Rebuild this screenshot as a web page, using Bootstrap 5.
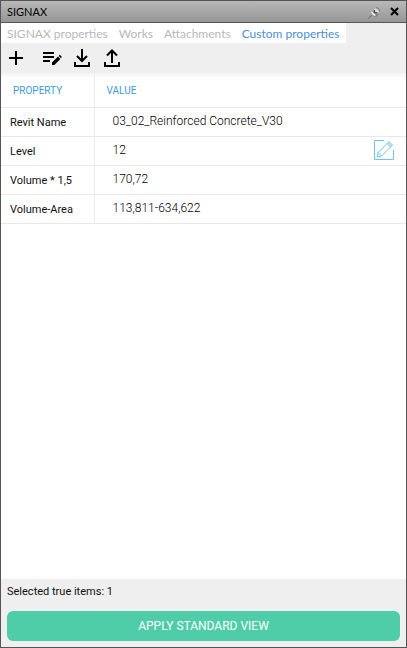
<!DOCTYPE html>
<html lang="en">
<head>
<meta charset="utf-8">
<meta name="viewport" content="width=device-width, initial-scale=1">
<title>SIGNAX</title>
<link href="https://cdn.jsdelivr.net/npm/bootstrap@5.3.0/dist/css/bootstrap.min.css" rel="stylesheet">
<style>
  body { font-family: Roboto, "Liberation Sans", sans-serif; font-size: 11px; line-height: 16px; color: #111; background: #efefef; }
  .panel { border: 1px solid #555; }
  .titlebar { height: 22px; padding: 0 3px 0 6px; background: linear-gradient(#b9b9b9, #969696); border-bottom: 1px solid #555; }
  .titlebar h1 { font: 11px/20px Lato, "Open Sans", sans-serif; color: #000; }
  .titlebar button { width: 16px; height: 16px; }
  .tabs { background: #fff; padding: 0 6px; gap: 11px; }
  .tabs .nav-link { color: #b8b8b8; padding: 1px 0 0; font: 12px/19px Lato, "Open Sans", sans-serif; white-space: nowrap; }
  .tabs .nav-link.active { color: #4a90d9; }
  .tools { height: 30px; padding: 0 5px; }
  .tools button, .edit { width: 20px; height: 20px; }
  .tools .btn + .btn { margin-left: 10px; }
  .tools .btn:nth-child(2) { margin-left: 16px; }
  .tools svg, .edit svg, .titlebar svg { display: block; }
  .props { table-layout: fixed; }
  .props th, .props td { height: 29px; padding: 2px 0 0 9px; border-bottom: 1px solid #e9e9e9; font-weight: 400; vertical-align: middle; }
  .props tr > :first-child { border-right: 1px solid #ececec; }
  .props td { padding: 0 0 1px 18px; font-size: 12px; font-weight: 300; color: #000; }
  .props thead th { height: 34px; padding-left: 12px; color: #3d9bd8; font-size: 10px; }
  .props thead { background: linear-gradient(#f4f4f4, #fff 6px); }
  .name-col { width: 93px; }
  .foot { padding: 5px 6px 6px; }
  .apply { height: 30px; margin-top: 11px; padding: 0; border: 0; border-radius: 6px; background: #4fcda8; color: #fff; font-size: 12px; line-height: 30px; }
</style>
</head>
<body>
<main class="panel d-flex flex-column vh-100">
  <header class="titlebar d-flex align-items-center">
    <h1 class="m-0 me-auto">SIGNAX</h1>
    <button type="button" class="btn p-0 border-0 me-1" aria-label="Pin panel">
      <svg width="16" height="16" viewBox="0 0 16 16"><path d="M1.500 14.500l4-4" stroke="#666"/><path d="M4 7.500l3-1 5 4-3 2.500-3-1z" fill="#808080"/><path d="M4.500 7.500q1 3 4 4" stroke="#eee" stroke-width="1.500" fill="none"/><path d="M7 6l2-2 3.500 3.500-2 2z" fill="#ddd"/><path d="M9 4q3-1 3.500 3.500" fill="#bbb" stroke="#707070"/><path d="M7.500 6v2.500h3" stroke="#555" fill="none"/></svg>
    </button>
    <button type="button" class="btn p-0 border-0" aria-label="Close panel">
      <svg width="16" height="16" viewBox="0 0 16 16"><path d="M4 4l7 7M11 4l-7 7" stroke="#000" stroke-width="2"/></svg>
    </button>
  </header>
  <nav class="tabs nav flex-nowrap align-self-start" aria-label="Panel sections">
    <a class="nav-link" href="#">SIGNAX properties</a>
    <a class="nav-link" href="#">Works</a>
    <a class="nav-link" href="#">Attachments</a>
    <a class="nav-link active" aria-current="page" href="#">Custom properties</a>
  </nav>
  <div class="tools d-flex align-items-center" role="toolbar" aria-label="Property actions">
    <button type="button" class="btn p-0 border-0" aria-label="Add property">
      <svg width="20" height="20" viewBox="0 0 20 20"><path d="M3 10h14M10 3v14" stroke="#000" stroke-width="2"/></svg>
    </button>
    <button type="button" class="btn p-0 border-0" aria-label="Edit list">
      <svg width="20" height="20" viewBox="0 0 20 20"><path d="M1 5h11M1 9h11M1 13h7" stroke="#000" stroke-width="2"/><path d="M10 17v-2.500l6-6 2.400 2.400-6 6zM16.700 7.900l1.100-1.100 2.200 2.200-1.100 1.100z"/></svg>
    </button>
    <button type="button" class="btn p-0 border-0" aria-label="Import">
      <svg width="20" height="20" viewBox="0 0 20 20"><path d="M10 1v12M5 8l5 5 5-5M3 14v4h14v-4" fill="none" stroke="#000" stroke-width="2"/></svg>
    </button>
    <button type="button" class="btn p-0 border-0" aria-label="Export">
      <svg width="20" height="20" viewBox="0 0 20 20"><path d="M10 15V2M5 7.500l5-5 5 5M3 14v4h14v-4" fill="none" stroke="#000" stroke-width="2"/></svg>
    </button>
  </div>
  <section class="flex-grow-1 bg-white overflow-auto">
    <table class="props w-100">
      <colgroup><col class="name-col"><col></colgroup>
      <thead><tr><th scope="col">PROPERTY</th><th scope="col">VALUE</th></tr></thead>
      <tbody>
        <tr><th scope="row">Revit Name</th><td>03_02_Reinforced Concrete_V30</td></tr>
        <tr><th scope="row">Level</th><td><div class="d-flex align-items-center justify-content-between pe-2"><span>12</span>
          <button type="button" class="edit btn p-0 border-0 me-1" aria-label="Edit Level"><svg width="20" height="20" viewBox="0 0 20 20"><path d="M10 .5H.5v19h19V10M3 17l1.200-4.500L15 1.500 18.500 5 7.500 16zM4.200 12.500L7.500 16M13 3.500L16.500 7M14 2.500L17.500 6" fill="none" stroke="#6fc3e8"/></svg></button></div></td></tr>
        <tr><th scope="row">Volume * 1,5</th><td>170,72</td></tr>
        <tr><th scope="row">Volume-Area</th><td>113,811-634,622</td></tr>
      </tbody>
    </table>
  </section>
  <footer class="foot">
    <div>Selected true items: 1</div>
    <button type="button" class="apply btn w-100 d-block">APPLY STANDARD VIEW</button>
  </footer>
</main>
<script src="https://cdn.jsdelivr.net/npm/bootstrap@5.3.0/dist/js/bootstrap.bundle.min.js"></script>
</body>
</html>
